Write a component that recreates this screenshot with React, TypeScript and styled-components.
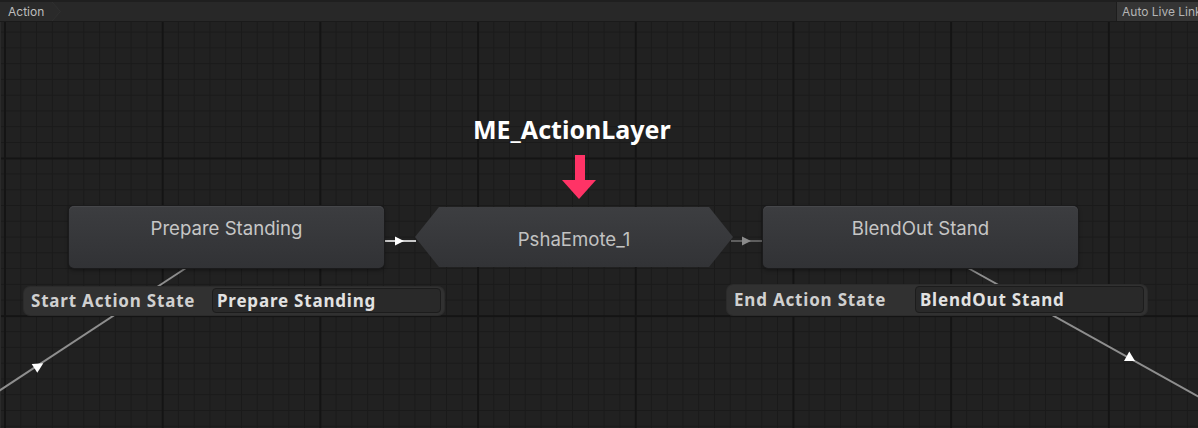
import React from 'react';
import styled, { createGlobalStyle } from 'styled-components';

const GlobalStyle = createGlobalStyle`
  html, body { margin: 0; padding: 0; background: #202020; overflow: hidden; }
  #root { width: 1198px; height: 428px; }
`;

const Window = styled.div`
  width: 1198px;
  height: 428px;
  display: flex;
  flex-direction: column;
  background: #202020;
  font-family: Inter, "Noto Sans", sans-serif;
  overflow: hidden;
`;

const Toolbar = styled.div`
  flex: 0 0 auto;
  height: 19px;
  display: grid;
  grid-template-columns: 62px 1fr 82px;
  background: #282828;
  border-top: 2px solid #1f1f1f;
  border-bottom: 1px solid #1a1a1a;
`;

const Breadcrumb = styled.div`
  position: relative;
  display: flex;
  align-items: center;
  padding-left: 8px;
  font-size: 12px;
  color: #bdbdbd;
  background: #2a2a2a;
  clip-path: polygon(0 0, 52px 0, 61px 50%, 52px 100%, 0 100%);
`;

const ChevronEdge = styled.svg`
  position: absolute;
  top: 0;
  right: 0;
  width: 11px;
  height: 19px;
`;

const LiveLinkButton = styled.div`
  display: flex;
  align-items: center;
  padding-left: 5px;
  font-size: 12px;
  color: #b4b4b4;
  background: #353535;
  border-left: 1px solid #1d1d1d;
  white-space: nowrap;
`;

const Canvas = styled.div`
  position: relative;
  flex: 1 1 auto;
  background-color: #212121;
  border-left: 1px solid #2a2a2a;
  background-image:
    linear-gradient(to right, #141414 0, #141414 2px, transparent 2px),
    linear-gradient(to bottom, #141414 0, #141414 2px, transparent 2px),
    linear-gradient(to right, #1a1a1a 0, #1a1a1a 1px, transparent 1px),
    linear-gradient(to bottom, #1a1a1a 0, #1a1a1a 1px, transparent 1px);
  background-size: 157.7px 100%, 100% 157.7px, 15.77px 100%, 100% 15.77px;
  background-position: 3px 0, 0 135.5px, 3.5px 0, 0 9.6px;
`;

const EdgeLayer = styled.svg`
  position: absolute;
  left: -1px;
  top: 0;
  width: 1198px;
  height: 406px;
`;

const StateNode = styled.div<{ $x: number; $y: number; $w: number; $h: number }>`
  position: absolute;
  left: ${p => p.$x}px;
  top: ${p => p.$y}px;
  width: ${p => p.$w}px;
  height: ${p => p.$h}px;
  box-sizing: border-box;
  display: flex;
  justify-content: center;
  padding-top: 11px;
  font-size: 18.6px;
  line-height: 22px;
  color: #c6c6c6;
  border-radius: 5px;
  background: linear-gradient(to bottom, #3c3d40 0%, #36373a 55%, #313235 100%);
  box-shadow: inset 0 1px 0 #46474a, 0 0 0 1px #1b1b1c, 0 2px 4px rgba(0, 0, 0, 0.45);
`;

const SubStateNode = styled.div<{ $x: number; $y: number; $w: number; $h: number }>`
  position: absolute;
  left: ${p => p.$x}px;
  top: ${p => p.$y}px;
  width: ${p => p.$w}px;
  height: ${p => p.$h}px;
  box-sizing: border-box;
  display: flex;
  align-items: center;
  justify-content: center;
  padding-top: 4px;
  font-size: 18.6px;
  color: #c2c2c2;
  background: linear-gradient(to bottom, #3d3e41 0%, #37383b 55%, #323336 100%);
  clip-path: polygon(0 50%, 24px 0, calc(100% - 24px) 0, 100% 50%, calc(100% - 24px) 100%, 24px 100%);
`;

const InfoBox = styled.div<{ $x: number; $y: number; $h: number }>`
  position: absolute;
  left: ${p => p.$x}px;
  top: ${p => p.$y}px;
  width: 420px;
  height: ${p => p.$h}px;
  box-sizing: border-box;
  display: grid;
  grid-template-columns: 188px 1fr;
  align-items: stretch;
  padding: 1px 3px 2px 0;
  border-radius: 6px;
  background: #313131;
  box-shadow: 0 0 0 1px #2b2b2b;
  font-family: "Noto Sans", Inter, sans-serif;
  font-weight: 700;
  font-size: 17px;
  letter-spacing: 0.8px;
`;

const InfoLabel = styled.div`
  display: flex;
  align-items: center;
  padding-left: 7px;
  color: #d0d0d0;
  white-space: nowrap;
`;

const InfoField = styled.div`
  display: flex;
  align-items: center;
  padding-left: 4px;
  color: #e2e2e2;
  background: #292929;
  border: 1px solid #1c1c1c;
  border-radius: 4px;
  white-space: nowrap;
`;

const Heading = styled.div`
  position: absolute;
  left: 472px;
  top: 92px;
  font-family: "Noto Sans", Inter, sans-serif;
  font-weight: 700;
  font-size: 25px;
  line-height: 30px;
  color: #ffffff;
  white-space: nowrap;
`;

const PointerArrow = styled.svg`
  position: absolute;
  left: 561px;
  top: 133px;
  width: 34px;
  height: 45px;
`;

type NodeData = { x: number; y: number; w: number; h: number; label: string; kind: 'state' | 'sub' };

const nodes: NodeData[] = [
  { x: 68, y: 184, w: 315, h: 62, label: 'Prepare Standing', kind: 'state' },
  { x: 414, y: 185, w: 318, h: 60, label: 'PshaEmote_1', kind: 'sub' },
  { x: 762, y: 184, w: 315, h: 62, label: 'BlendOut Stand', kind: 'state' },
];

const infos = [
  { x: 23, y: 265, h: 28, label: 'Start Action State', value: 'Prepare Standing' },
  { x: 726, y: 263, h: 30, label: 'End Action State', value: 'BlendOut Stand' },
];

export default function App() {
  return (
    <Window>
      <GlobalStyle />
      <Toolbar>
        <Breadcrumb>
          Action
          <ChevronEdge viewBox="0 0 11 19">
            <polyline points="1,0 10,9.5 1,19" fill="none" stroke="#3a3a3a" strokeWidth="1" />
          </ChevronEdge>
        </Breadcrumb>
        <div />
        <LiveLinkButton>Auto Live Link</LiveLinkButton>
      </Toolbar>
      <Canvas>
        <EdgeLayer viewBox="0 22 1198 406">
          <line x1="186" y1="268" x2="-2" y2="391.5" stroke="#8e8e8e" strokeWidth="2" />
          <polygon points="31.7,364 43.3,363.3 37.3,372.7" fill="#ffffff" />
          <line x1="968" y1="268" x2="1200" y2="397.5" stroke="#8e8e8e" strokeWidth="2" />
          <polygon points="1129.3,351.5 1124,361 1135,361" fill="#ffffff" />
          <line x1="383" y1="241" x2="416" y2="241" stroke="#c8c8c8" strokeWidth="2" />
          <polygon points="395,236.5 404,241 395,245.5" fill="#ffffff" />
          <line x1="731" y1="241" x2="763" y2="241" stroke="#5e5e5e" strokeWidth="2" />
          <polygon points="742,236.5 751,241 742,245.5" fill="#8a8a8a" />
        </EdgeLayer>
        {nodes.map(n =>
          n.kind === 'state' ? (
            <StateNode key={n.label} $x={n.x} $y={n.y} $w={n.w} $h={n.h}>{n.label}</StateNode>
          ) : (
            <SubStateNode key={n.label} $x={n.x} $y={n.y} $w={n.w} $h={n.h}>{n.label}</SubStateNode>
          )
        )}
        {infos.map(i => (
          <InfoBox key={i.label} $x={i.x} $y={i.y} $h={i.h}>
            <InfoLabel>{i.label}</InfoLabel>
            <InfoField>{i.value}</InfoField>
          </InfoBox>
        ))}
        <Heading>ME_ActionLayer</Heading>
        <PointerArrow viewBox="0 0 34 45">
          <rect x="13" y="0" width="10" height="27" fill="#ff3366" />
          <polygon points="0,25 34,25 17,44" fill="#ff3366" />
        </PointerArrow>
      </Canvas>
    </Window>
  );
}
